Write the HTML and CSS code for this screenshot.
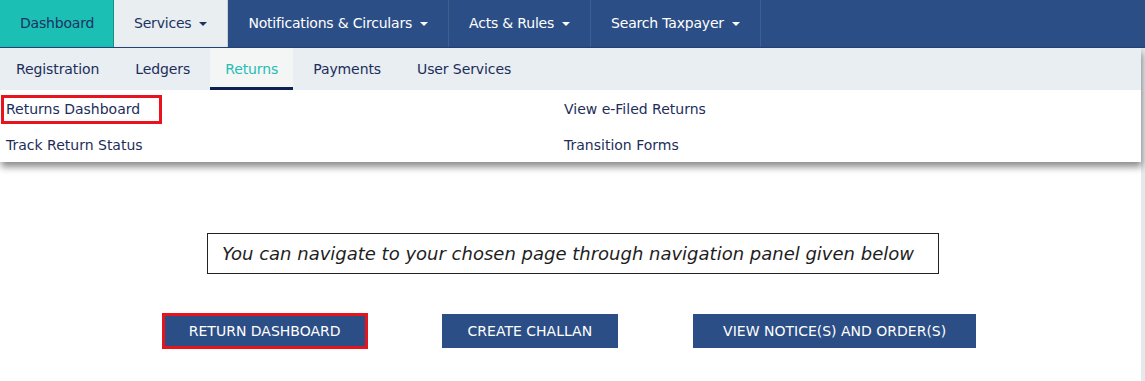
FILE: index.html
```html
<!DOCTYPE html>
<html lang="en">
  <head>
    <meta charset="UTF-8" />
    <meta name="viewport" content="width=device-width, initial-scale=1.0" />
    <title>Returns Dashboard</title>
    <link rel="stylesheet" href="styles.css">
  </head>
  <body>
    <nav class="topnav">
      <a class="topnav-item home" href="#">Dashboard</a>
      <a class="topnav-item open" href="#">Services <span class="caret"></span></a>
      <a class="topnav-item" href="#">Notifications &amp; Circulars <span class="caret"></span></a>
      <a class="topnav-item" href="#">Acts &amp; Rules <span class="caret"></span></a>
      <a class="topnav-item" href="#">Search Taxpayer <span class="caret"></span></a>
    </nav>

    <div class="page">
      <div class="megamenu">
        <ul class="subnav">
          <li><a href="#">Registration</a></li>
          <li><a href="#">Ledgers</a></li>
          <li class="active"><a href="#">Returns</a></li>
          <li><a href="#">Payments</a></li>
          <li><a href="#">User Services</a></li>
        </ul>
        <ul class="menu-links">
          <li><a class="marked" href="#">Returns Dashboard</a></li>
          <li><a href="#">View e-Filed Returns</a></li>
          <li><a href="#">Track Return Status</a></li>
          <li><a href="#">Transition Forms</a></li>
        </ul>
      </div>

      <div class="content">
        <p class="notice">You can navigate to your chosen page through navigation panel given below</p>
        <div class="actions">
          <button class="btn marked-btn">RETURN DASHBOARD</button>
          <button class="btn">CREATE CHALLAN</button>
          <button class="btn wide">VIEW NOTICE(S) AND ORDER(S)</button>
        </div>
      </div>
    </div>
  </body>
</html>
```

FILE: styles.css
```css
body {
  margin: 0;
  background: #e4e9ec;
  font-family: "DejaVu Sans", Verdana, sans-serif;
  font-size: 14px;
  overflow: hidden;
}

a {
  text-decoration: none;
}

ul {
  list-style: none;
  margin: 0;
  padding: 0;
}

.topnav {
  display: flex;
  height: 47px;
  background: #2c4e86;
  border-bottom: 1px solid #24437a;
  letter-spacing: -0.2px;
}

.topnav-item {
  display: flex;
  align-items: center;
  padding: 0 20px 1px;
  color: #ffffff;
  border-right: 1px solid #3f5f93;
}

.topnav-item.home {
  width: 73px;
  background: #1bbfb4;
  color: #1d3264;
  border-right: 1px solid #1a8f8a;
}

.topnav-item.open {
  background: #e9eef1;
  color: #1d3264;
  border-right: 1px solid #c9d2d8;
}

.caret {
  display: inline-block;
  margin-left: 8px;
  margin-top: 2px;
  border-left: 4px solid transparent;
  border-right: 4px solid transparent;
  border-top: 4px solid currentColor;
}

.page {
  position: relative;
  margin-right: 4px;
  height: 333px;
  background: #ffffff;
}

.megamenu {
  position: absolute;
  top: 0;
  left: 0;
  right: 0;
  z-index: 2;
  background: #ffffff;
  box-shadow: 1px 5px 7px rgba(0, 0, 0, 0.45);
}

.subnav {
  display: flex;
  gap: 4px;
  height: 42px;
  background: #e8eef1;
  letter-spacing: -0.1px;
}

.subnav li {
  display: flex;
}

.subnav a {
  display: flex;
  align-items: center;
  padding: 3px 16px 0;
  color: #1d2d5a;
  border-bottom: 3px solid transparent;
}

.subnav .active a {
  background: #f4f5f5;
  color: #26bdb5;
  border-bottom-color: #0f2152;
  padding: 3px 15px 0;
}

.menu-links {
  display: grid;
  grid-template-columns: 558px 1fr;
  grid-auto-rows: 36px;
  padding-left: 6px;
}

.menu-links li {
  display: flex;
  align-items: center;
  padding-top: 2px;
}

.menu-links a {
  color: #1d2d5a;
}

.menu-links a.marked {
  margin-left: -5px;
  padding: 3px 19px 4px 2px;
  border: 3px solid #e8141d;
}

.content {
  padding-top: 185px;
  display: flex;
  flex-direction: column;
  align-items: center;
}

.notice {
  margin: 0 0 0 5px;
  padding: 0 0 0 14px;
  width: 716px;
  height: 39px;
  border: 1px solid #222222;
  display: flex;
  align-items: center;
  font-style: italic;
  font-size: 18px;
  color: #1e1e1e;
}

.actions {
  display: flex;
  gap: 75px;
  margin-top: 40px;
  margin-right: 2px;
}

.btn {
  height: 34px;
  padding: 0 26px;
  border: none;
  background: #2c4e86;
  color: #ffffff;
  font-family: "DejaVu Sans", Verdana, sans-serif;
  font-size: 14px;
}

.btn.wide {
  padding: 0 30px;
}

.btn.marked-btn {
  outline: 3px solid #e8141d;
  outline-offset: -2px;
}
```
